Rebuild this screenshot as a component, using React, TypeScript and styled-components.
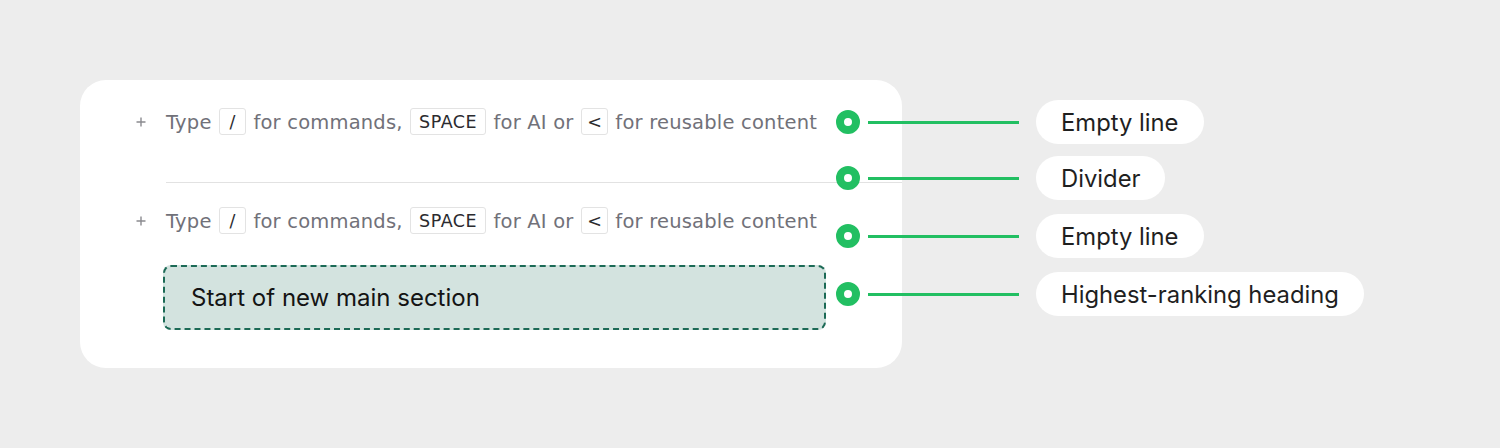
import styled, { createGlobalStyle } from 'styled-components';

const GlobalStyle = createGlobalStyle`
  html, body {
    margin: 0;
    padding: 0;
    background: #ededed;
  }
  body {
    font-family: Inter, "Noto Sans", sans-serif;
  }
`;

const annotations = [
  { label: 'Empty line', offset: 0 },
  { label: 'Divider', offset: 12 },
  { label: 'Empty line', offset: 14 },
  { label: 'Highest-ranking heading', offset: 14 },
];

export default function App() {
  return (
    <>
      <GlobalStyle />
      <Stage>
        <Card>
          <PlaceholderRow />
          <Divider />
          <PlaceholderRow />
          <Heading>Start of new main section</Heading>
        </Card>
        <Annotations>
          {annotations.map((a, i) => (
            <Annotation key={i} offset={a.offset}>
              <Dot />
              <Connector />
              <Label>{a.label}</Label>
            </Annotation>
          ))}
        </Annotations>
      </Stage>
    </>
  );
}

function PlaceholderRow() {
  return (
    <Row>
      <PlusCol>
        <svg width="10" height="10" viewBox="0 0 10 10">
          <path d="M5 0.5v9M0.5 5h9" stroke="#8a8a8f" strokeWidth="1.4" />
        </svg>
      </PlusCol>
      <Placeholder>
        Type <Key>/</Key> for commands, <Key wide>SPACE</Key> for AI or <Key>&lt;</Key> for reusable content
      </Placeholder>
    </Row>
  );
}

const Stage = styled.div`
  display: flex;
  align-items: flex-start;
  padding: 80px 0 0 80px;
  height: 448px;
  box-sizing: border-box;
`;

const Card = styled.div`
  width: 822px;
  box-sizing: border-box;
  background: #fff;
  border-radius: 26px;
  padding: 20px 0 38px 50px;
`;

const Row = styled.div`
  display: flex;
  align-items: center;
  height: 44px;
`;

const PlusCol = styled.div`
  width: 36px;
  display: flex;
  align-items: center;
  padding-left: 6px;
  box-sizing: border-box;
`;

const Placeholder = styled.div`
  font-family: "DejaVu Sans", sans-serif;
  font-size: 19.5px;
  letter-spacing: 0.2px;
  line-height: 28px;
  color: #717179;
  white-space: nowrap;
  padding-top: 2px;
`;

const Key = styled.span<{ wide?: boolean }>`
  display: inline-flex;
  align-items: center;
  justify-content: center;
  vertical-align: middle;
  width: ${(p) => (p.wide ? '76px' : '27px')};
  height: 27px;
  box-sizing: border-box;
  margin: 0 1px;
  border: 1px solid #e3e3e3;
  border-radius: 3px;
  font-size: 17.5px;
  letter-spacing: ${(p) => (p.wide ? '0.5px' : '0')};
  color: #2b2b2f;
  position: relative;
  top: -2px;
`;

const Divider = styled.div`
  height: 1px;
  background: #e2e2e2;
  margin: 38px 0 16px 36px;
`;

const Heading = styled.div`
  margin: 22px 0 0 33px;
  width: 663px;
  height: 65px;
  box-sizing: border-box;
  border: 2px dashed #1c6a56;
  border-radius: 8px;
  background: #d3e3df;
  display: flex;
  align-items: center;
  padding-left: 26px;
  font-size: 24px;
  color: #141414;
`;

const Annotations = styled.div`
  display: flex;
  flex-direction: column;
  margin-left: -66px;
  padding-top: 20px;
`;

const Annotation = styled.div<{ offset: number }>`
  display: flex;
  align-items: center;
  height: 44px;
  margin-top: ${(p) => p.offset}px;
`;

const Dot = styled.div`
  width: 8px;
  height: 8px;
  border: 8px solid #22bf62;
  border-radius: 50%;
  background: #fff;
  flex-shrink: 0;
`;

const Connector = styled.div`
  width: 151px;
  height: 3px;
  background: #22bf62;
  margin: 0 17px 0 8px;
`;

const Label = styled.div`
  height: 44px;
  display: flex;
  align-items: center;
  padding: 0 25px;
  background: #fff;
  border-radius: 22px;
  font-size: 23.8px;
  color: #1f1f1f;
  white-space: nowrap;
`;
